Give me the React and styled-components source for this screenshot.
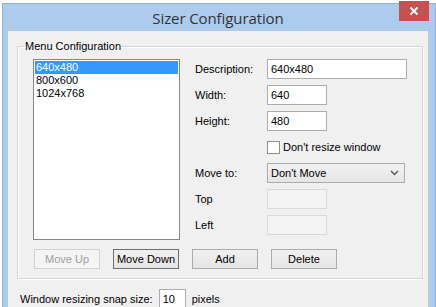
import React from "react";
import styled, { createGlobalStyle } from "styled-components";

const GlobalStyle = createGlobalStyle`
  html, body {
    margin: 0;
    padding: 0;
    background: #ffffff;
    overflow: hidden;
  }
  body {
    font-family: "Liberation Sans", Arial, sans-serif;
    font-size: 11px;
    color: #000;
  }
`;

const resolutions = ["640x480", "800x600", "1024x768"];

const App = () => {
  return (
    <>
      <GlobalStyle />
      <Window>
        <TitleBar>
          <Title>Sizer Configuration</Title>
          <CloseButton>
            <svg width="10" height="10" viewBox="0 0 10 10">
              <path d="M1.5 1.5 L8.5 8.5 M8.5 1.5 L1.5 8.5" stroke="#fff" strokeWidth="1.8" />
            </svg>
          </CloseButton>
        </TitleBar>
        <Client>
          <GroupBox>
            <Legend>Menu Configuration</Legend>
            <Panel>
              <ListBox>
                {resolutions.map((r, i) => (
                  <ListItem key={r} selected={i === 0}>
                    {r}
                  </ListItem>
                ))}
              </ListBox>
              <Form>
                <Row>
                  <Label>Description:</Label>
                  <TextBox width={140} value="640x480" readOnly />
                </Row>
                <Row>
                  <Label>Width:</Label>
                  <TextBox width={60} value="640" readOnly />
                </Row>
                <Row>
                  <Label>Height:</Label>
                  <TextBox width={60} value="480" readOnly />
                </Row>
                <Row>
                  <Label />
                  <CheckLabel>
                    <CheckBox />
                    Don't resize window
                  </CheckLabel>
                </Row>
                <Row>
                  <Label>Move to:</Label>
                  <Select>
                    <span>Don't Move</span>
                    <svg width="9" height="6" viewBox="0 0 9 6">
                      <path d="M1 1 L4.5 4.5 L8 1" stroke="#555" strokeWidth="1.4" fill="none" />
                    </svg>
                  </Select>
                </Row>
                <Row>
                  <Label>Top</Label>
                  <TextBox width={60} disabled />
                </Row>
                <Row>
                  <Label>Left</Label>
                  <TextBox width={60} disabled />
                </Row>
              </Form>
            </Panel>
            <ButtonRow>
              <Button disabled>Move Up</Button>
              <Button focused>Move Down</Button>
              <Button>Add</Button>
              <Button>Delete</Button>
            </ButtonRow>
          </GroupBox>
          <SnapRow>
            <span>Window resizing snap size:</span>
            <TextBox width={27} value="10" readOnly />
            <span>pixels</span>
          </SnapRow>
        </Client>
      </Window>
    </>
  );
};

const Window = styled.div`
  display: flex;
  flex-direction: column;
  width: 434px;
  height: 320px;
  margin: 3px 0 0 2px;
  box-sizing: border-box;
  padding: 0 7px 0 5px;
  background: #adcbed;
  border: 1px solid #8fb0d8;
  border-bottom: none;
`;

const TitleBar = styled.div`
  position: relative;
  height: 27px;
  display: flex;
  align-items: center;
  justify-content: center;
`;

const Title = styled.div`
  font-family: "Open Sans", "Noto Sans", sans-serif;
  font-size: 15px;
  color: #333;
  letter-spacing: -0.1px;
`;

const CloseButton = styled.div`
  position: absolute;
  top: -3px;
  right: -1px;
  width: 30px;
  height: 20px;
  display: flex;
  align-items: center;
  justify-content: center;
  background: #c75050;
`;

const Client = styled.div`
  flex: 1;
  background: #f0f0f0;
  padding-top: 8px;
`;

const GroupBox = styled.fieldset`
  margin: 0 8px 0 9px;
  padding: 6px 15px 9px 15px;
  border: 1px solid #d5d5d5;
  box-shadow: inset 1px 1px 0 #fff, 1px 1px 0 #fff;
`;

const Legend = styled.legend`
  margin-left: -9px;
  padding: 0 1px;
  line-height: 14px;
  color: #000;
`;

const Panel = styled.div`
  display: grid;
  grid-template-columns: 147px 1fr;
  column-gap: 15px;
`;

const ListBox = styled.div`
  height: 181px;
  box-sizing: border-box;
  border: 1px solid #828790;
  background: #fff;
  padding: 1px;
`;

const ListItem = styled.div`
  height: 13px;
  line-height: 13px;
  padding-left: 1px;
  background: ${(p) => (p.selected ? "#3399ff" : "transparent")};
  color: ${(p) => (p.selected ? "#fff" : "#000")};
`;

const Form = styled.div`
  display: flex;
  flex-direction: column;
  gap: 6px;
`;

const Row = styled.div`
  display: flex;
  align-items: center;
  height: 20px;
`;

const Label = styled.div`
  width: 72px;
  flex-shrink: 0;
`;

const TextBox = styled.input`
  width: ${(p) => p.width}px;
  height: 20px;
  box-sizing: border-box;
  border: 1px solid ${(p) => (p.disabled ? "#d9d9d9" : "#abadb3")};
  background: ${(p) => (p.disabled ? "#f4f4f4" : "#fff")};
  font-family: inherit;
  font-size: 11px;
  padding: 0 3px;
  color: #000;
  outline: none;
`;

const CheckLabel = styled.label`
  display: flex;
  align-items: center;
  gap: 3px;
`;

const CheckBox = styled.span`
  width: 13px;
  height: 13px;
  box-sizing: border-box;
  border: 1px solid #8e8f8f;
  background: #fff;
`;

const Select = styled.div`
  width: 138px;
  height: 20px;
  box-sizing: border-box;
  display: flex;
  align-items: center;
  justify-content: space-between;
  padding: 0 5px 0 3px;
  border: 1px solid #acacac;
  background: linear-gradient(#f2f2f2, #e5e5e5);
`;

const ButtonRow = styled.div`
  display: flex;
  gap: 13px;
  margin: 9px 0 0 1px;
`;

const Button = styled.button`
  width: 66px;
  height: 20px;
  box-sizing: border-box;
  padding: 0;
  font-family: inherit;
  font-size: 11px;
  color: ${(p) => (p.disabled ? "#a0a0a0" : "#000")};
  border: 1px solid
    ${(p) => (p.disabled ? "#d3d3d3" : p.focused ? "#707070" : "#acacac")};
  background: ${(p) =>
    p.disabled ? "#f4f4f4" : "linear-gradient(#f0f0f0, #e5e5e5)"};
`;

const SnapRow = styled.div`
  display: flex;
  align-items: center;
  gap: 6px;
  margin: 10px 0 0 12px;
`;

export default App;
